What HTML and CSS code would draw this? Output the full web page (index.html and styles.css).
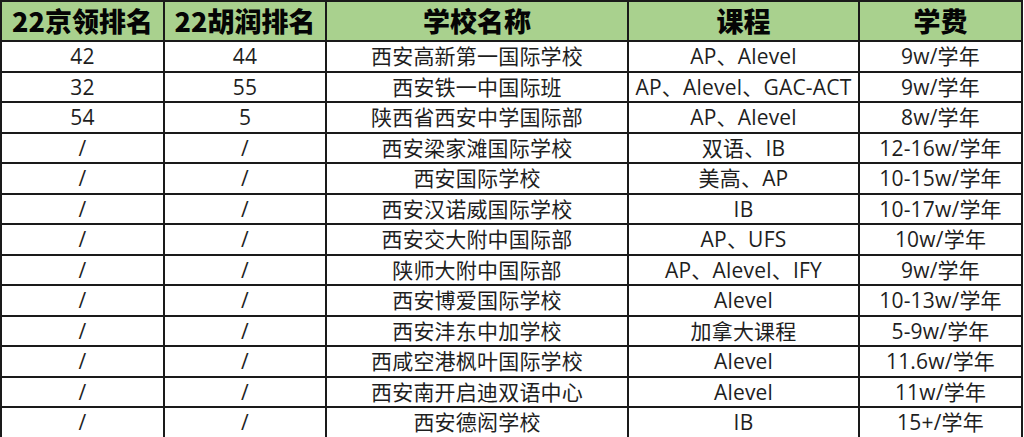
FILE: index.html
```html
<!DOCTYPE html>
<html lang="zh">
<head>
<meta charset="utf-8">
<link rel="stylesheet" href="styles.css">
</head>
<body>
<table class="tbl">
<colgroup>
<col class="c1"><col class="c2"><col class="c3"><col class="c4"><col class="c5">
</colgroup>
<thead>
<tr><th>22京领排名</th><th>22胡润排名</th><th>学校名称</th><th>课程</th><th>学费</th></tr>
</thead>
<tbody>
<tr><td>42</td><td>44</td><td>西安高新第一国际学校</td><td>AP、Alevel</td><td>9w/学年</td></tr>
<tr><td>32</td><td>55</td><td>西安铁一中国际班</td><td>AP、Alevel、GAC-ACT</td><td>9w/学年</td></tr>
<tr><td>54</td><td>5</td><td>陕西省西安中学国际部</td><td>AP、Alevel</td><td>8w/学年</td></tr>
<tr><td>/</td><td>/</td><td>西安梁家滩国际学校</td><td>双语、IB</td><td>12-16w/学年</td></tr>
<tr><td>/</td><td>/</td><td>西安国际学校</td><td>美高、AP</td><td>10-15w/学年</td></tr>
<tr><td>/</td><td>/</td><td>西安汉诺威国际学校</td><td>IB</td><td>10-17w/学年</td></tr>
<tr><td>/</td><td>/</td><td>西安交大附中国际部</td><td>AP、UFS</td><td>10w/学年</td></tr>
<tr><td>/</td><td>/</td><td>陕师大附中国际部</td><td>AP、Alevel、IFY</td><td>9w/学年</td></tr>
<tr><td>/</td><td>/</td><td>西安博爱国际学校</td><td>Alevel</td><td>10-13w/学年</td></tr>
<tr><td>/</td><td>/</td><td>西安沣东中加学校</td><td>加拿大课程</td><td>5-9w/学年</td></tr>
<tr><td>/</td><td>/</td><td>西咸空港枫叶国际学校</td><td>Alevel</td><td>11.6w/学年</td></tr>
<tr><td>/</td><td>/</td><td>西安南开启迪双语中心</td><td>Alevel</td><td>11w/学年</td></tr>
<tr><td>/</td><td>/</td><td>西安德闳学校</td><td>IB</td><td>15+/学年</td></tr>
</tbody>
</table>
</body>
</html>
```
FILE: styles.css
```css
html, body {
  margin: 0;
  padding: 0;
  background: #ffffff;
}
.tbl {
  border-collapse: collapse;
  table-layout: fixed;
  width: 1021px;
  font-family: "Open Sans", "Noto Sans CJK SC", sans-serif;
  color: #1e1e1e;
}
.c1 { width: 163px; }
.c2 { width: 162px; }
.c3 { width: 302px; }
.c4 { width: 231px; }
.c5 { width: 163px; }
.tbl th, .tbl td {
  border: 2px solid #1a1a1a;
  text-align: center;
  padding: 0;
  white-space: nowrap;
  overflow: hidden;
}
.tbl th {
  background: #a9d18e;
  height: 38px;
  font-family: "Noto Sans CJK SC", sans-serif;
  font-weight: 900;
  font-size: 27px;
  color: #050505;
  line-height: 38px;
}
.tbl td {
  height: 28.5px;
  font-size: 21px;
  line-height: 28px;
  letter-spacing: 0.2px;
}
```
